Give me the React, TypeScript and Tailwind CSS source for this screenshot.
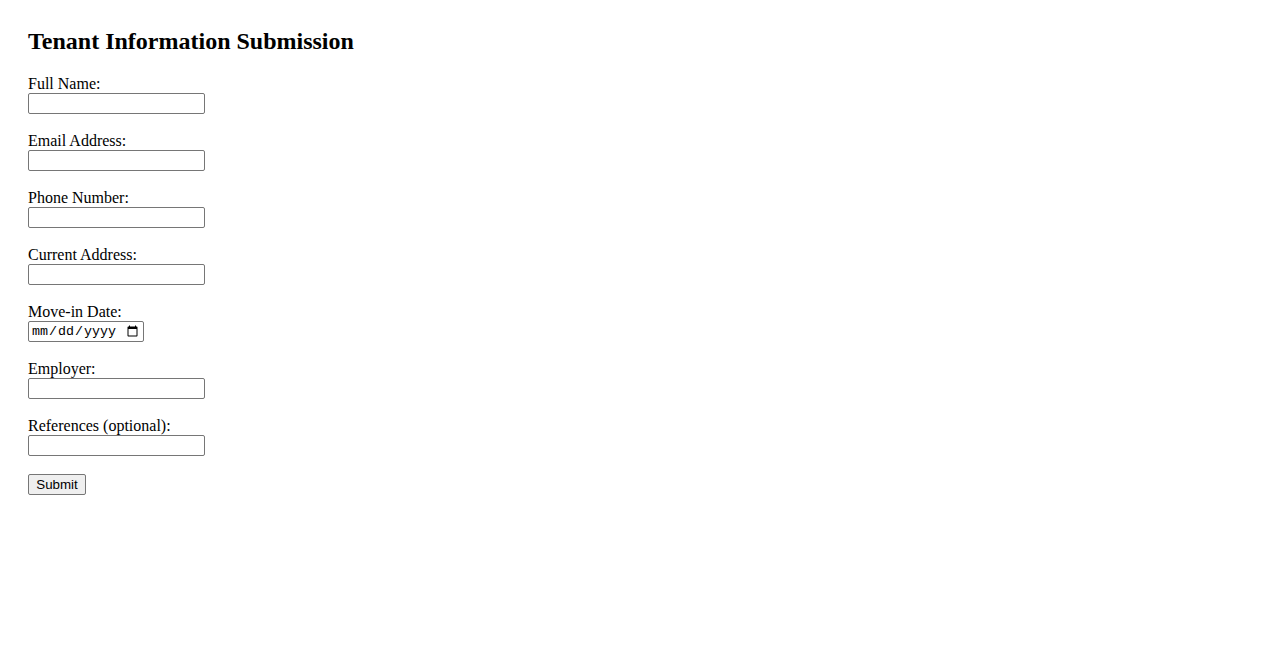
import React from "react";

const fields = [
  { label: "Full Name:", type: "text" },
  { label: "Email Address:", type: "email" },
  { label: "Phone Number:", type: "tel" },
  { label: "Current Address:", type: "text" },
  { label: "Move-in Date:", type: "date" },
  { label: "Employer:", type: "text" },
  { label: "References (optional):", type: "text" },
];

export default function App() {
  return (
    <div className="min-h-[650px] bg-white pl-[28px] pt-[27px] text-black" style={{ fontFamily: '"Liberation Serif", "Times New Roman", serif' }}>
      <h2 className="mb-[20px] h-[28px] text-[24px] font-bold leading-[28px]">Tenant Information Submission</h2>
      <form className="flex flex-col items-start" onSubmit={(e) => e.preventDefault()}>
        {fields.map((f) => (
          <div key={f.label} className="mb-[18px] flex flex-col items-start">
            <label className="block h-[18px] text-[16px] leading-[18px]">{f.label}</label>
            {f.type === "date" ? (
              <input
                type="date"
                className="box-border h-[21px] w-[116px] rounded-[2px] border border-[#767676] bg-white px-[2px] text-[13.33px] leading-[19px]"
                style={{ fontFamily: '"Liberation Mono", monospace' }}
              />
            ) : (
              <input
                type={f.type}
                className="box-border h-[21px] w-[177px] rounded-[2px] border border-[#767676] bg-white px-[2px] text-[13.33px]"
                style={{ fontFamily: '"Liberation Sans", Arial, sans-serif' }}
              />
            )}
          </div>
        ))}
        <button
          type="submit"
          className="box-border h-[21px] w-[58px] rounded-[2px] border border-[#767676] bg-[#efefef] p-0 text-[13.33px] leading-[19px] text-black"
          style={{ fontFamily: '"Liberation Sans", Arial, sans-serif' }}
        >
          Submit
        </button>
      </form>
    </div>
  );
}
